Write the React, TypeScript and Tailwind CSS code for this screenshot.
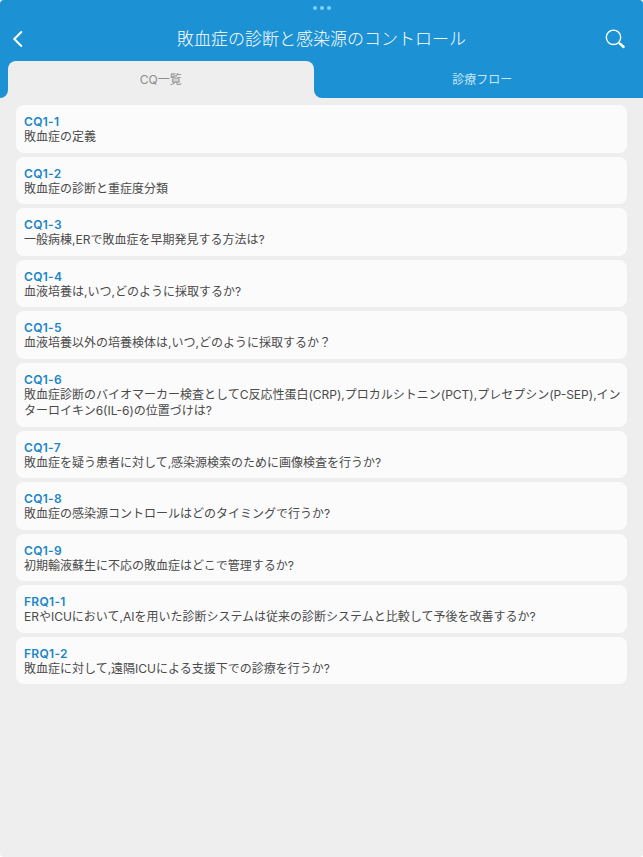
type Question = { id: string; text: string };

const questions: Question[] = [
  { id: "CQ1-1", text: "敗血症の定義" },
  { id: "CQ1-2", text: "敗血症の診断と重症度分類" },
  { id: "CQ1-3", text: "一般病棟,ERで敗血症を早期発見する方法は?" },
  { id: "CQ1-4", text: "血液培養は,いつ,どのように採取するか?" },
  { id: "CQ1-5", text: "血液培養以外の培養検体は,いつ,どのように採取するか？" },
  {
    id: "CQ1-6",
    text: "敗血症診断のバイオマーカー検査としてC反応性蛋白(CRP),プロカルシトニン(PCT),プレセプシン(P-SEP),インターロイキン6(IL-6)の位置づけは?",
  },
  { id: "CQ1-7", text: "敗血症を疑う患者に対して,感染源検索のために画像検査を行うか?" },
  { id: "CQ1-8", text: "敗血症の感染源コントロールはどのタイミングで行うか?" },
  { id: "CQ1-9", text: "初期輸液蘇生に不応の敗血症はどこで管理するか?" },
  { id: "FRQ1-1", text: "ERやICUにおいて,AIを用いた診断システムは従来の診断システムと比較して予後を改善するか?" },
  { id: "FRQ1-2", text: "敗血症に対して,遠隔ICUによる支援下での診療を行うか?" },
];

function Header() {
  return (
    <header className="bg-[#1c91d3] text-white">
      <div className="flex h-4 items-center justify-center gap-[3px]" aria-hidden="true">
        <span className="size-1 rounded-full bg-[#7bd2fb]" />
        <span className="size-1 rounded-full bg-[#7bd2fb]" />
        <span className="size-1 rounded-full bg-[#7bd2fb]" />
      </div>
      <div className="flex h-[45px] items-center justify-between px-2">
        <button type="button" aria-label="戻る" className="flex size-10 items-center justify-start pl-1">
          <svg width="12" height="18" viewBox="0 0 12 18" fill="none" stroke="currentColor" strokeWidth="2">
            <path d="M9.3 2 2.3 9l7 7" strokeLinecap="round" strokeLinejoin="miter" />
          </svg>
        </button>
        <h1 className="text-[17px] leading-6 font-light">敗血症の診断と感染源のコントロール</h1>
        <button type="button" aria-label="検索" className="flex size-10 items-center justify-center">
          <svg width="20" height="20" viewBox="0 0 20 20" fill="none" stroke="currentColor">
            <circle cx="8.5" cy="8.3" r="7.2" strokeWidth="1.4" />
            <path d="m13.6 13.4 1.5 1.5" strokeWidth="1.4" />
            <path d="m15.2 14.9 3.2 2.9" strokeWidth="2.6" strokeLinecap="round" />
          </svg>
        </button>
      </div>
    </header>
  );
}

function Tabs() {
  return (
    <div role="tablist" className="flex h-[37px] text-xs leading-4">
      <div className="w-2 rounded-br-lg bg-[#1c91d3]" />
      <div className="w-[calc(50%-16px)] bg-linear-to-b from-[#1c91d3] from-50% to-[#eee] to-50%">
        <button
          type="button"
          role="tab"
          aria-selected="true"
          className="size-full rounded-t-lg bg-[#eee] text-[#8c8c8c]"
        >
          CQ一覧
        </button>
      </div>
      <button
        type="button"
        role="tab"
        aria-selected="false"
        className="flex-1 rounded-bl-lg bg-[#1c91d3] pl-2 text-[#c9e8fa]"
      >
        診療フロー
      </button>
    </div>
  );
}

function QuestionCard({ id, text }: Question) {
  return (
    <li>
      <button
        type="button"
        className="block w-full rounded-lg bg-[#fbfbfb] pt-[9px] pr-1 pb-[7px] pl-2 text-left text-xs"
      >
        <span className="block leading-[15px] font-semibold tracking-wide text-[#1c86c6]">{id}</span>
        <span className="block leading-snug text-[#4a4a4a]">{text}</span>
      </button>
    </li>
  );
}

export default function App() {
  return (
    <div lang="ja" className="bg-white font-[Inter,'Noto_Sans_CJK_JP',sans-serif]">
      <div className="min-h-screen overflow-hidden rounded-[4px] bg-[#eee]">
        <Header />
        <Tabs />
        <main className="px-4 pt-[7px] pb-4">
          <ul className="flex flex-col gap-1">
            {questions.map((q) => (
              <QuestionCard key={q.id} id={q.id} text={q.text} />
            ))}
          </ul>
        </main>
      </div>
    </div>
  );
}
